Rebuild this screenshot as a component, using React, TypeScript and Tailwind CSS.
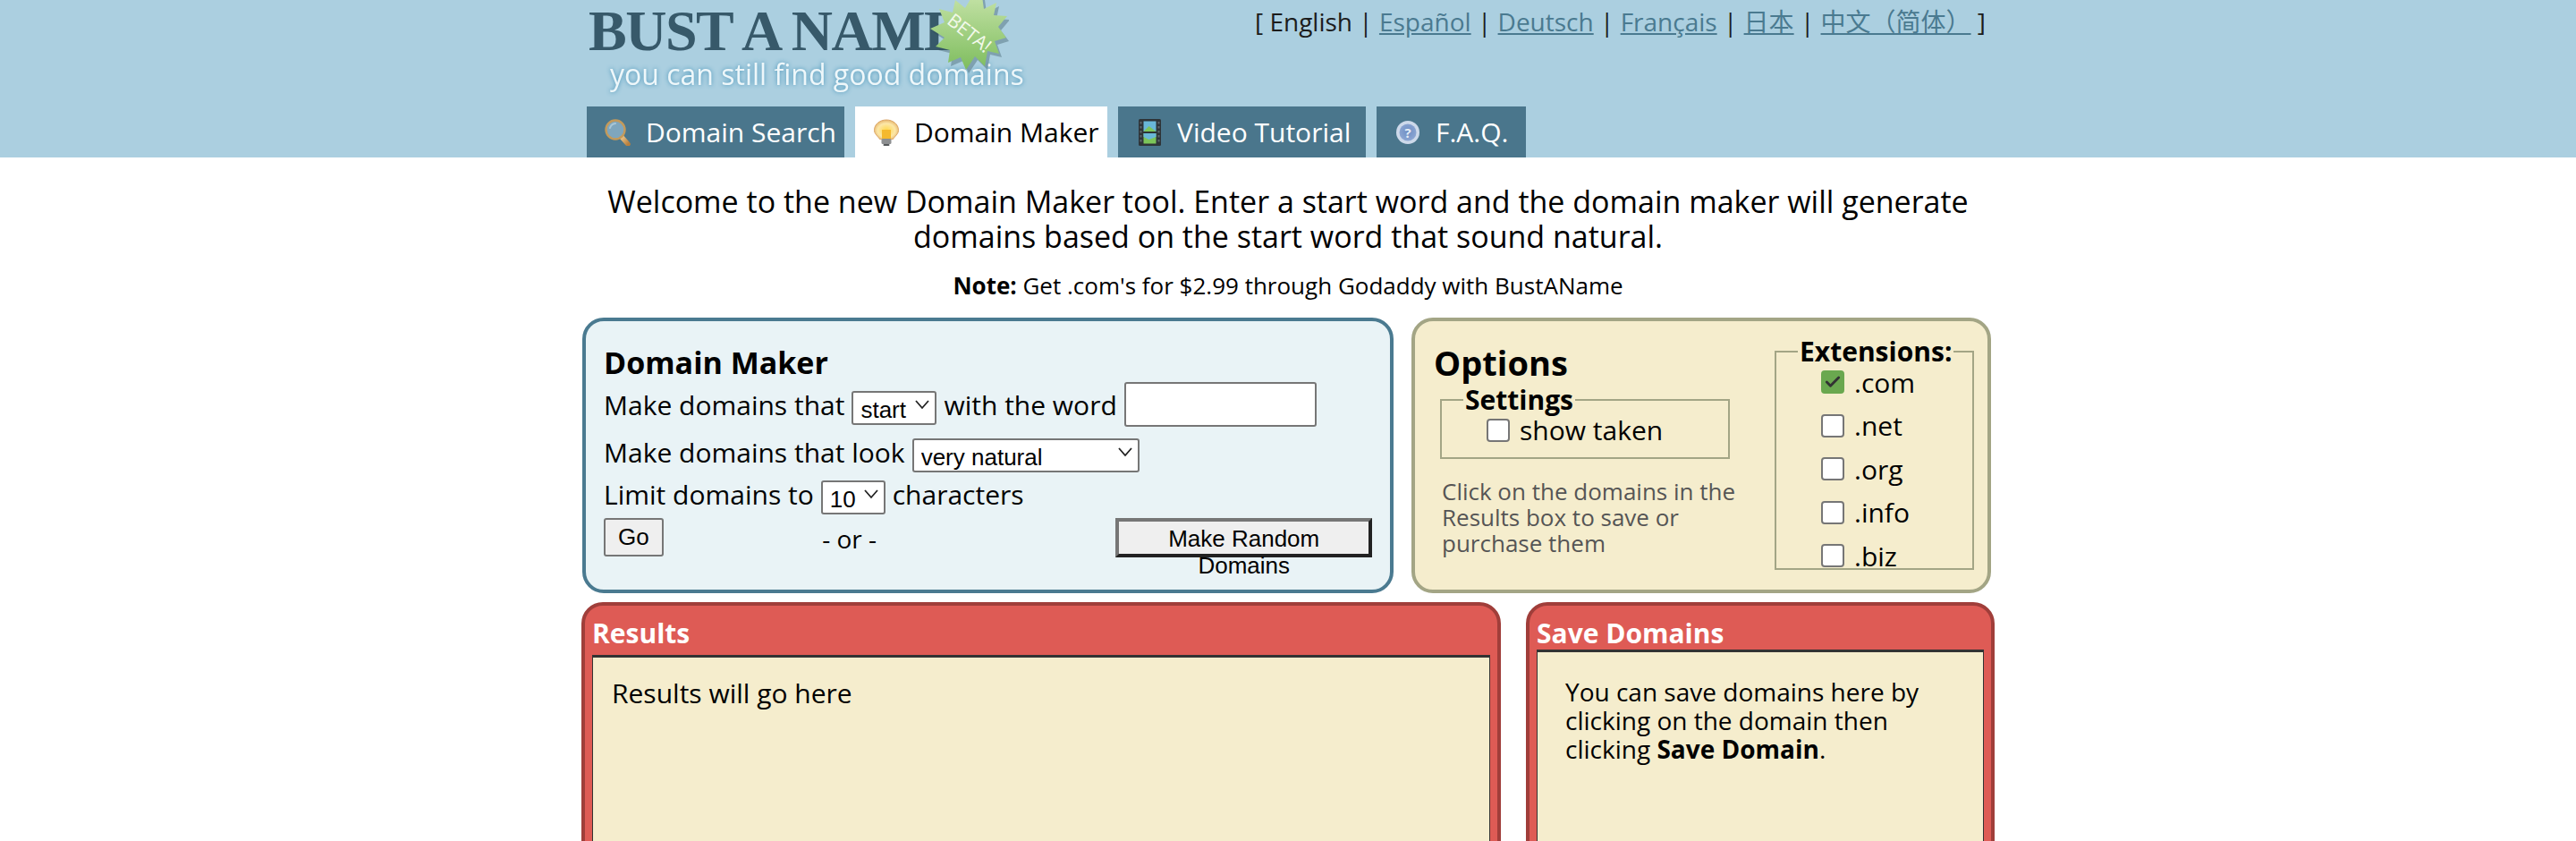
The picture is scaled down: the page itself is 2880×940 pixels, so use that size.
import { Check } from 'lucide-react'

const LANGS = [
  { label: 'Español' },
  { label: 'Deutsch' },
  { label: 'Français' },
  { label: '日本' },
  { label: '中文（简体）' },
]

const EXTENSIONS = [
  { label: '.com', checked: true },
  { label: '.net', checked: false },
  { label: '.org', checked: false },
  { label: '.info', checked: false },
  { label: '.biz', checked: false },
]

function SearchIcon() {
  return (
    <svg width="30" height="30" viewBox="0 0 30 30">
      <defs>
        <linearGradient id="handle" x1="0" y1="0" x2="1" y2="1">
          <stop offset="0" stopColor="#f3cf94" />
          <stop offset="1" stopColor="#b8803f" />
        </linearGradient>
      </defs>
      <path d="M18 19l8 9" stroke="url(#handle)" strokeWidth="5.5" strokeLinecap="round" />
      <circle cx="12" cy="12" r="10.5" fill="#7fa6bd" stroke="#c49a5a" strokeWidth="2.4" />
      <path d="M6 10a7 7 0 0 1 6-5" stroke="#a9c6d6" strokeWidth="2" fill="none" strokeLinecap="round" />
    </svg>
  )
}

function BulbIcon() {
  return (
    <svg width="30" height="30" viewBox="0 0 30 30">
      <defs>
        <radialGradient id="bulb" cx="0.5" cy="0.55" r="0.6">
          <stop offset="0" stopColor="#ffd84a" />
          <stop offset="0.6" stopColor="#fce7a8" />
          <stop offset="1" stopColor="#e0a95c" />
        </radialGradient>
      </defs>
      <path d="M15 1C7.500 1 1.500 6 1.500 12.500c0 4.500 4 6.500 6 10h15c2-3.500 6-5.500 6-10C28.500 6 22.500 1 15 1z" fill="url(#bulb)" stroke="#dba667" strokeWidth="1" />
      <rect x="10" y="12" width="10" height="10" fill="#f5b92e" />
      <rect x="9.500" y="22" width="11" height="6" rx="1.500" fill="#8d8f91" />
      <rect x="11.500" y="28" width="7" height="2" rx="1" fill="#55585a" />
    </svg>
  )
}

function FilmIcon() {
  return (
    <svg width="25" height="30" viewBox="0 0 25 30">
      <rect x="0" y="0" width="25" height="30" rx="1.500" fill="#2e3438" />
      <rect x="5.500" y="2.500" width="14" height="11.500" fill="#69b7d8" />
      <path d="M5.500 14l6-6 8 6z" fill="#7cc55a" />
      <rect x="5.500" y="16" width="14" height="11.500" fill="#7cc55a" />
      <path d="M5.500 16h14v4l-8 3-6-3z" fill="#69b7d8" />
      {[3, 8, 13, 18, 23].map(y => (
        <g key={y}>
          <rect x="1.500" y={y} width="2" height="2.500" fill="#5d666c" />
          <rect x="21.500" y={y} width="2" height="2.500" fill="#5d666c" />
        </g>
      ))}
    </svg>
  )
}

function HelpIcon() {
  return (
    <svg width="28" height="28" viewBox="0 0 28 28">
      <defs>
        <radialGradient id="help" cx="0.5" cy="0.45" r="0.6">
          <stop offset="0" stopColor="#6f8fc4" />
          <stop offset="1" stopColor="#8fa8d4" />
        </radialGradient>
      </defs>
      <circle cx="14" cy="14" r="13" fill="#cdd9ea" />
      <circle cx="14" cy="14" r="9.500" fill="url(#help)" />
      <text x="14" y="19.500" textAnchor="middle" fontSize="15" fontWeight="700" fill="#e6edf7" fontFamily="'Open Sans', sans-serif">?</text>
    </svg>
  )
}

function Tab({ icon, label, active, width }: { icon: React.ReactNode; label: string; active?: boolean; width: string }) {
  return (
    <a className={`flex h-[57px] items-center gap-[16px] pl-[20px] text-[30px] ${width} ${active ? 'bg-white text-black' : 'bg-[#4a768c] text-white'}`}>
      <span className="flex w-[30px] justify-center">{icon}</span>
      <span>{label}</span>
    </a>
  )
}

function Logo() {
  return (
    <div className="relative h-[119px] w-[480px] pl-[2px]">
      <div className="h-[58px] pt-[4px] font-['Liberation_Serif',serif] text-[64px] leading-[62px] font-bold tracking-[-1.5px] whitespace-nowrap text-[#37596a] blur-[0.6px]">
        BUST A NAME
      </div>
      <div className="mt-[6px] pl-[24px] text-[32px] leading-[38px] whitespace-nowrap text-[#eef7fa] blur-[0.4px] [text-shadow:0_0_5px_#3f8fb5]">
        you can still find good domains
      </div>
      <svg className="absolute top-0 left-[382px]" width="90" height="82" viewBox="0 0 90 82">
        <defs>
          <linearGradient id="star" x1="0" y1="0" x2="0" y2="1">
            <stop offset="0" stopColor="#c4e2a6" />
            <stop offset="1" stopColor="#7ebd5e" />
          </linearGradient>
        </defs>
        <polygon
          points="60,-4 62,10 76,3 73,17 88,18 78,30 87,42 74,46 79,60 66,57 63,74 52,63 42,78 36,64 22,70 24,56 8,52 18,42 2,32 18,25 12,10 27,14 30,0 41,9 50,-6"
          fill="#2d4a55"
          opacity="0.35"
          transform="translate(3 4)"
        />
        <polygon
          points="60,-4 62,10 76,3 73,17 88,18 78,30 87,42 74,46 79,60 66,57 63,74 52,63 42,78 36,64 22,70 24,56 8,52 18,42 2,32 18,25 12,10 27,14 30,0 41,9 50,-6"
          fill="url(#star)"
        />
        <text x="45" y="44" textAnchor="middle" fontSize="21" fill="#f2f9ea" fontFamily="'Open Sans', sans-serif" transform="rotate(38 45 38)">BETA!</text>
      </svg>
    </div>
  )
}

function NativeSelect({ value, width }: { value: string; width: string }) {
  return (
    <span className={`relative inline-block h-[38px] align-middle ${width}`}>
      <select className="h-full w-full appearance-none rounded-[3px] border-2 border-[#767676] bg-white pl-[8px] font-['Liberation_Sans',sans-serif] text-[26px] text-black">
        <option>{value}</option>
      </select>
      <svg className="absolute top-[13px] right-[8px]" width="16" height="12" viewBox="0 0 16 12" fill="none" stroke="#222" strokeWidth="1.800">
        <path d="M1 2l7 8 7-8" />
      </svg>
    </span>
  )
}

function Box({ checked }: { checked?: boolean }) {
  return (
    <span className="relative block h-[26px] w-[26px]">
      <input
        type="checkbox"
        readOnly
        checked={!!checked}
        className={`block h-[26px] w-[26px] appearance-none rounded-[4px] border-2 ${checked ? 'border-[#6aa84f] bg-[#6aa84f]' : 'border-[#767676] bg-white'}`}
      />
      {checked && <Check className="absolute top-[3px] left-[3px] text-[#333]" size={20} strokeWidth={3.500} />}
    </span>
  )
}

export default function App() {
  return (
    <div className="h-[940px] overflow-hidden bg-white font-['Open_Sans','Noto_Sans_CJK_SC',sans-serif] text-black">
      <header className="h-[176px] bg-[#abcfe0]">
        <div className="mx-auto w-[1580px] pl-[6px]">
          <div className="flex justify-between pr-[10px]">
            <Logo />
            <div className="pt-[6px] text-[28px] leading-[36px] text-[#1c1c1c]">
              [ English
              {LANGS.map(l => (
                <span key={l.label}>
                  {' | '}
                  <a className="text-[#4a7a90] underline">{l.label}</a>
                </span>
              ))}
              {' ]'}
            </div>
          </div>
          <nav className="flex gap-[12px]">
            <Tab icon={<SearchIcon />} label="Domain Search" width="w-[288px]" />
            <Tab icon={<BulbIcon />} label="Domain Maker" width="w-[282px]" active />
            <Tab icon={<FilmIcon />} label="Video Tutorial" width="w-[277px]" />
            <Tab icon={<HelpIcon />} label="F.A.Q." width="w-[167px]" />
          </nav>
        </div>
      </header>

      <main className="mx-auto w-[1580px]">
        <p className="mx-auto mt-[30px] w-[1580px] text-center text-[34px] leading-[39px]">
          Welcome to the new Domain Maker tool. Enter a start word and the domain maker will generate
          <br />
          domains based on the start word that sound natural.
        </p>
        <p className="mt-[17px] text-center text-[26px] leading-[36px]">
          <b>Note:</b> Get .com's for $2.99 through Godaddy with BustAName
        </p>

        <div className="mt-[18px] flex justify-between pr-[4px] pl-[1px]">
          <section className="h-[308px] w-[907px] rounded-[24px] border-4 border-[#4a7a90] bg-[#e9f3f6] px-[20px] pt-[24px] text-[30px]">
            <h2 className="text-[34px] leading-[44px] font-bold">Domain Maker</h2>
            <div className="flex h-[50px] items-center gap-[8px]">
              Make domains that
              <NativeSelect value="start" width="w-[95px]" />
              with the word
              <input className="h-[50px] w-[215px] rounded-[3px] border-2 border-[#767676] bg-white" />
            </div>
            <div className="mt-[8px] flex h-[40px] items-center gap-[8px]">
              Make domains that look
              <NativeSelect value="very natural" width="w-[254px]" />
            </div>
            <div className="mt-[7px] flex h-[40px] items-center gap-[8px]">
              Limit domains to
              <NativeSelect value="10" width="w-[72px]" />
              characters
            </div>
            <div className="mt-[7px] flex items-start">
              <button className="h-[43px] w-[67px] rounded-[3px] border-2 border-[#767676] bg-[#efefef] font-['Liberation_Sans',sans-serif] text-[26px]">Go</button>
              <span className="w-[506px] pt-[2px] pr-[90px] text-center text-[28px] leading-[42px]">- or -</span>
              <button className="h-[44px] w-[287px] border-4 border-t-[#767676] border-r-[#222] border-b-[#222] border-l-[#767676] bg-[#efefef] font-['Liberation_Sans',sans-serif] text-[26px] leading-[30px]">
                <span className="block h-[30px] pt-[1px]">
                  Make Random
                  <br />
                  Domains
                </span>
              </button>
            </div>
          </section>

          <section className="flex h-[308px] w-[648px] justify-between rounded-[24px] border-4 border-[#a3a585] bg-[#f5edcd] pt-[24px] pr-[15px] pl-[21px]">
            <div className="w-[332px]">
              <h2 className="text-[38px] leading-[44px] font-bold">Options</h2>
              <fieldset className="mt-[2px] ml-[7px] h-[84px] w-[324px] border-2 border-[#a3a585] pl-[24px]">
                <legend className="px-[2px] text-[30px] leading-[36px] font-bold">Settings</legend>
                <label className="-mt-[2px] flex items-center gap-[11px] pl-[26px] text-[30px] leading-[36px]">
                  <Box /> show taken
                </label>
              </fieldset>
              <p className="mt-[22px] ml-[9px] w-[340px] text-[26px] leading-[29px] text-[#555]">
                Click on the domains in the Results box to save or purchase them
              </p>
            </div>
            <fieldset className="-mt-[8px] h-[262px] w-[223px] border-2 border-[#a3a585] pl-[50px]">
              <legend className="-ml-[26px] px-[2px] text-[30px] leading-[36px] font-bold">Extensions:</legend>
              <div className="-mt-[3px] flex flex-col gap-[10.500px]">
                {EXTENSIONS.map(e => (
                  <label key={e.label} className="flex h-[38px] items-center gap-[11px] text-[30px]">
                    <Box checked={e.checked} /> {e.label}
                  </label>
                ))}
              </div>
            </fieldset>
          </section>
        </div>

        <div className="mt-[10px] flex justify-between">
          <section className="h-[600px] w-[1028px] rounded-t-[24px] border-4 border-[#a03e3a] bg-[#de5b55] px-[8px]">
            <h3 className="h-[55px] pt-[8px] text-[30px] leading-[46px] font-bold text-white">Results</h3>
            <div className="h-[520px] border border-t-[3px] border-[#333] bg-[#f5edcd] pt-[20px] pl-[21px] text-[30px] leading-[40px]">
              Results will go here
            </div>
          </section>
          <section className="h-[600px] w-[524px] rounded-t-[24px] border-4 border-[#a03e3a] bg-[#de5b55] px-[8px]">
            <h3 className="h-[49px] pt-[8px] text-[30px] leading-[46px] font-bold text-white">Save Domains</h3>
            <div className="h-[520px] border border-t-[3px] border-[#333] bg-[#f5edcd] pt-[28px] pr-[30px] pl-[31px] text-[28px] leading-[32px]">
              You can save domains here by clicking on the domain then clicking <b>Save Domain</b>.
            </div>
          </section>
        </div>
      </main>
    </div>
  )
}
